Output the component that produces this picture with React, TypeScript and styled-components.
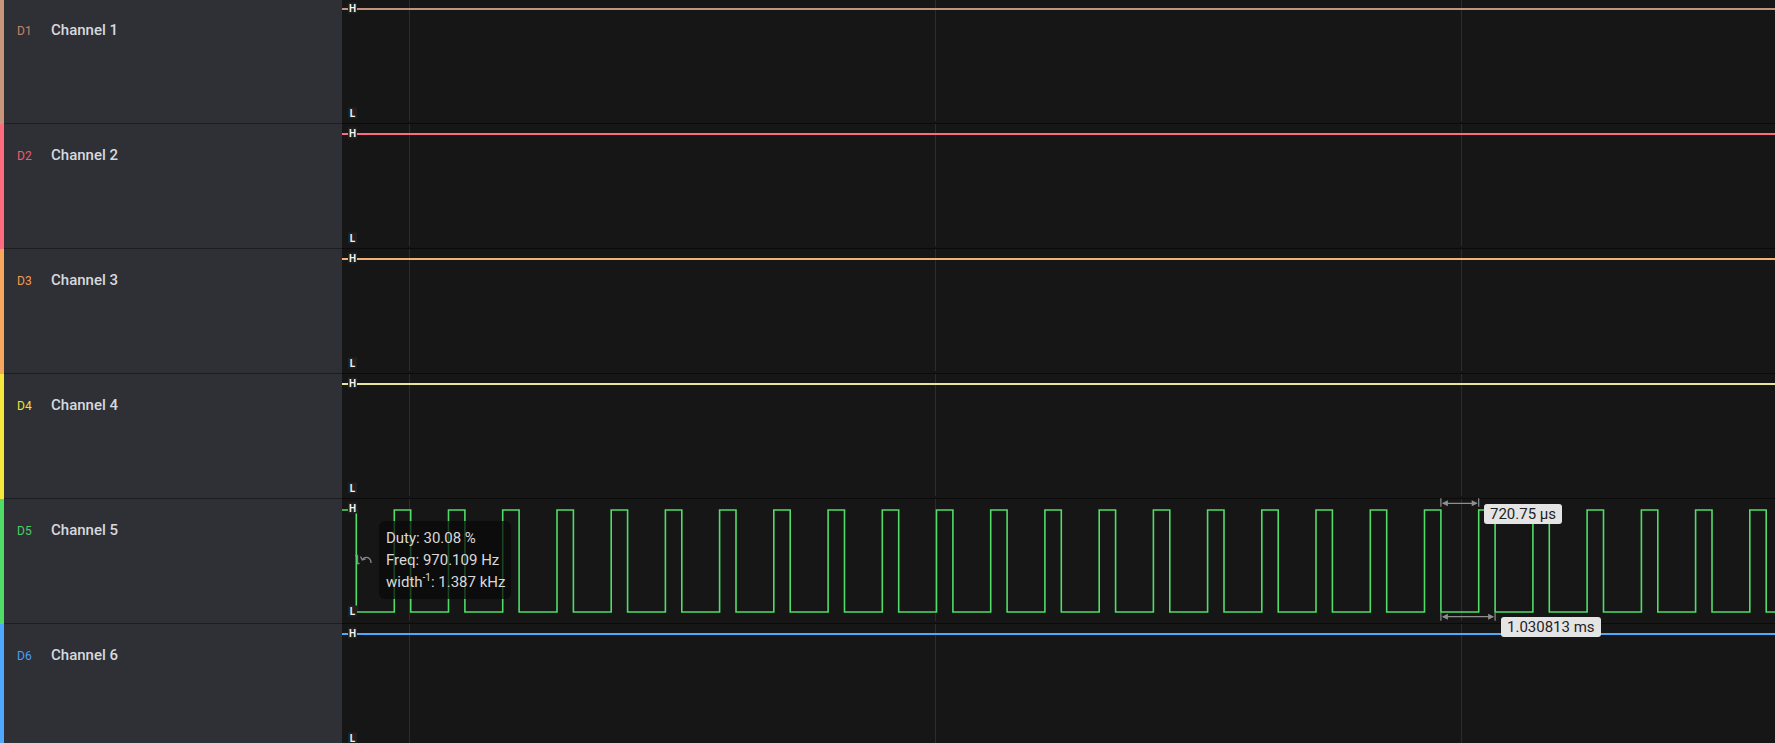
import React from "react";
import styled, { createGlobalStyle } from "styled-components";

const GlobalStyle = createGlobalStyle`
  html, body { margin: 0; padding: 0; background: #161616; overflow: hidden; }
  body { font-family: Roboto, "Liberation Sans", sans-serif; }
`;

const PLOT_W = 1433;
const GRID_X = [67.5, 593.5, 1119.5];
const HIGH_Y = 10;
const PULSE_HIGH = 11;
const PULSE_LOW = 113;
const PERIOD = 54.22;
const FIRST_RISE = 52.3;
const HIGH_W = 16.4;

type Channel = { id: string; name: string; bar: string; label: string; line: string; pulse?: boolean };

const channels: Channel[] = [
  { id: "D1", name: "Channel 1", bar: "#c9957b", label: "#c48468", line: "#c4937d" },
  { id: "D2", name: "Channel 2", bar: "#ff6b7e", label: "#f2596c", line: "#ff6b7e" },
  { id: "D3", name: "Channel 3", bar: "#f7a85c", label: "#f29b4c", line: "#f2b27a" },
  { id: "D4", name: "Channel 4", bar: "#f7e83c", label: "#efe034", line: "#e8e49a" },
  { id: "D5", name: "Channel 5", bar: "#4fdd68", label: "#4ccf62", line: "#4fdd68", pulse: true },
  { id: "D6", name: "Channel 6", bar: "#4ea9ff", label: "#4a9ef2", line: "#4ea9ff" },
];

const Page = styled.div`
  display: flex;
  flex-direction: column;
  margin-top: -1px;
  width: 1775px;
`;

const Row = styled.div<{ $front?: boolean }>`
  display: flex;
  height: 125px;
  flex: 0 0 125px;
  position: relative;
  z-index: ${(p) => (p.$front ? 2 : 1)};
`;

const ColorBar = styled.div<{ $color: string }>`
  width: 4px;
  flex: 0 0 4px;
  background: ${(p) => p.$color};
`;

const Sidebar = styled.div`
  flex: 0 0 338px;
  box-sizing: border-box;
  background: #2f3035;
  border-bottom: 1px solid #1d1e21;
  display: flex;
  align-items: flex-start;
  padding: 22px 0 0 13px;
  gap: 19px;
`;

const ChannelId = styled.span<{ $color: string }>`
  color: ${(p) => p.$color};
  font-size: 12px;
  line-height: 18px;
  width: 15px;
  padding-top: 1px;
`;

const ChannelName = styled.span`
  color: #d6d9df;
  font-size: 15px;
  font-weight: 500;
  line-height: 18px;
`;

const Plot = styled.div`
  flex: 1 1 auto;
  position: relative;
  background: #161616;
  border-bottom: 1px solid #0b0b0b;
  box-sizing: border-box;
`;

const Wave = styled.svg`
  display: block;
  width: 100%;
  height: 124px;
  overflow: visible;
`;

const Tooltip = styled.div`
  position: absolute;
  left: 37px;
  top: 22px;
  width: 132px;
  box-sizing: border-box;
  padding: 6px 7px;
  border-radius: 6px;
  background: rgba(8, 8, 8, 0.72);
  color: #d9d9d9;
  font-size: 15px;
  line-height: 22px;
  white-space: nowrap;
  sup { font-size: 10px; line-height: 0; vertical-align: 6px; }
`;

const Measure = styled.div<{ $x: number; $y: number }>`
  position: absolute;
  left: ${(p) => p.$x}px;
  top: ${(p) => p.$y}px;
  height: 20px;
  padding: 0 6px;
  border-radius: 3px;
  background: #e4e4e4;
  color: #1e1e1e;
  font-size: 15px;
  line-height: 20px;
  white-space: nowrap;
`;

function LevelTag({ y, text }: { y: number; text: string }) {
  return (
    <g>
      <rect x={6} y={y - 5.5} width={9} height={11} fill="#202020" />
      <text x={10.5} y={y + 3.5} fill="#f2f2f2" fontSize={10} fontWeight={700} textAnchor="middle" fontFamily="Roboto, sans-serif">
        {text}
      </text>
    </g>
  );
}

function pulsePath() {
  let d = `M0 ${PULSE_HIGH} H14.3 V${PULSE_LOW}`;
  for (let k = 0; ; k++) {
    const rise = FIRST_RISE + k * PERIOD;
    if (rise > PLOT_W) break;
    const fall = rise + HIGH_W;
    d += ` H${rise.toFixed(1)} V${PULSE_HIGH} H${fall.toFixed(1)} V${PULSE_LOW}`;
  }
  d += ` H${PLOT_W}`;
  return d;
}

function Dimension({ x1, x2, y, t1, t2 }: { x1: number; x2: number; y: number; t1: number; t2: number }) {
  const c = "#8e8e8e";
  return (
    <g>
      <line x1={x1} y1={t1} x2={x1} y2={t2} stroke={c} strokeWidth={1.2} />
      <line x1={x2} y1={t1} x2={x2} y2={t2} stroke={c} strokeWidth={1.2} />
      <line x1={x1 + 2} y1={y} x2={x2 - 2} y2={y} stroke={c} strokeWidth={1.2} />
      <polygon points={`${x1 + 1},${y} ${x1 + 7},${y - 3} ${x1 + 7},${y + 3}`} fill={c} />
      <polygon points={`${x2 - 1},${y} ${x2 - 7},${y - 3} ${x2 - 7},${y + 3}`} fill={c} />
    </g>
  );
}

function ChannelRow({ ch }: { ch: Channel }) {
  const rise20 = FIRST_RISE + 20 * PERIOD;
  const fall19 = FIRST_RISE + 19 * PERIOD + HIGH_W;
  const fall20 = rise20 + HIGH_W;
  return (
    <Row $front={ch.pulse}>
      <ColorBar $color={ch.bar} />
      <Sidebar>
        <ChannelId $color={ch.label}>{ch.id}</ChannelId>
        <ChannelName>{ch.name}</ChannelName>
      </Sidebar>
      <Plot>
        <Wave>
          {GRID_X.map((x) => (
            <line key={x} x1={x} y1={0} x2={x} y2={122} stroke="#2c2c2c" strokeWidth={1} />
          ))}
          {ch.pulse ? (
            <path d={pulsePath()} fill="none" stroke={ch.line} strokeWidth={1.6} />
          ) : (
            <line x1={0} y1={HIGH_Y} x2={PLOT_W} y2={HIGH_Y} stroke={ch.line} strokeWidth={2} />
          )}
          <LevelTag y={9} text="H" />
          <LevelTag y={ch.pulse ? 112 : 114} text="L" />
          {ch.pulse && (
            <g stroke="#8a8a8a" strokeWidth={1.3} fill="none">
              <path d="M13 56.5 H15.5 V64.5 H17.5" />
              <path d="M29 64 C29 58.5 23.5 56.5 20.5 60.5" />
              <path d="M18.5 57.5 L20.3 61 L23.6 60" />
            </g>
          )}
          {ch.pulse && (
            <>
              <Dimension x1={fall19} x2={rise20} y={4.3} t1={-0.7} t2={7.7} />
              <Dimension x1={fall19} x2={fall20} y={117.7} t1={113.7} t2={121.7} />
            </>
          )}
        </Wave>
        {ch.pulse && (
          <>
            <Tooltip>
              <div>Duty: 30.08 %</div>
              <div>Freq: 970.109 Hz</div>
              <div>
                width<sup>-1</sup>: 1.387 kHz
              </div>
            </Tooltip>
            <Measure $x={1142} $y={5}>720.75 µs</Measure>
            <Measure $x={1159} $y={118}>1.030813 ms</Measure>
          </>
        )}
      </Plot>
    </Row>
  );
}

export default function App() {
  return (
    <>
      <GlobalStyle />
      <Page>
        {channels.map((ch) => (
          <ChannelRow key={ch.id} ch={ch} />
        ))}
      </Page>
    </>
  );
}
